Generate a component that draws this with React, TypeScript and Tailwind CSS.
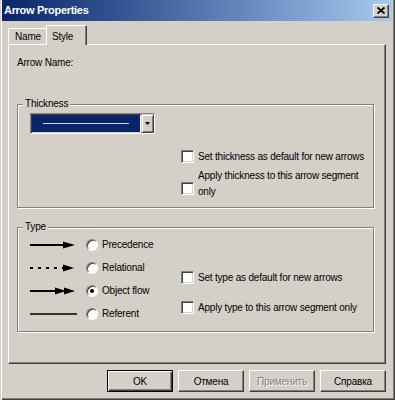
import type { ReactNode } from "react";

const sunken =
  "border border-t-[#808080] border-l-[#808080] border-b-white border-r-white shadow-[inset_1px_1px_0_#404040,inset_-1px_-1px_0_#d4d0c8]";

function Checkbox() {
  return <span className={`block h-[13px] w-[13px] shrink-0 bg-white ${sunken}`} />;
}

function Radio({ checked = false }: { checked?: boolean }) {
  return (
    <span className="flex h-[12px] w-[12px] shrink-0 items-center justify-center rounded-full border border-t-[#808080] border-l-[#808080] border-b-white border-r-white bg-white shadow-[inset_1px_1px_0_#404040]">
      {checked && <span className="h-[4px] w-[4px] rounded-full bg-black" />}
    </span>
  );
}

function ArrowLine({ kind }: { kind: "solid" | "dashed" | "double" | "plain" }) {
  return (
    <svg width="48" height="10" viewBox="0 0 48 10" className="shrink-0">
      {kind === "solid" && (
        <>
          <line x1="0" y1="5" x2="36" y2="5" stroke="#000" strokeWidth="2" />
          <polygon points="33,1.5 45,5 33,8.5" fill="#000" />
        </>
      )}
      {kind === "dashed" && (
        <>
          <line x1="0" y1="5" x2="34" y2="5" stroke="#000" strokeWidth="2" strokeDasharray="3 5" />
          <polygon points="33,1.5 44,5 33,8.5" fill="#000" />
        </>
      )}
      {kind === "double" && (
        <>
          <line x1="0" y1="5" x2="28" y2="5" stroke="#000" strokeWidth="2" />
          <polygon points="25,1.5 36,5 25,8.5" fill="#000" />
          <polygon points="34,1.5 45,5 34,8.5" fill="#000" />
        </>
      )}
      {kind === "plain" && <line x1="0" y1="5" x2="47" y2="5" stroke="#000" strokeWidth="1.6" />}
    </svg>
  );
}

function Group({ label, className, children }: { label: string; className: string; children: ReactNode }) {
  return (
    <div className={`relative border border-[#808080] shadow-[inset_1px_1px_0_#fff,1px_1px_0_#fff] ${className}`}>
      <span className="absolute -top-[8px] left-[5px] bg-[#d4d0c8] px-[2px] leading-[13px]">{label}</span>
      {children}
    </div>
  );
}

function Button({ label, isDefault = false, disabled = false }: { label: string; isDefault?: boolean; disabled?: boolean }) {
  const frame = isDefault
    ? "border border-black shadow-[inset_1px_1px_0_#fff,inset_-1px_-1px_0_#404040,inset_-2px_-2px_0_#808080]"
    : "border border-t-white border-l-white border-b-[#404040] border-r-[#404040] shadow-[inset_-1px_-1px_0_#808080]";
  return (
    <button
      className={`flex h-[22px] w-[66px] items-center justify-center bg-[#d4d0c8] ${frame} ${
        disabled ? "text-[#808080] [text-shadow:1px_1px_0_#fff]" : "text-black"
      }`}
    >
      {label}
    </button>
  );
}

const types = [
  { kind: "solid" as const, label: "Precedence" },
  { kind: "dashed" as const, label: "Relational" },
  { kind: "double" as const, label: "Object flow", checked: true },
  { kind: "plain" as const, label: "Referent" },
];

export default function App() {
  return (
    <div className="flex h-[400px] w-[395px] flex-col overflow-hidden bg-[#d4d0c8] pl-[2px] pr-[3px] font-['Liberation_Sans',Arial,sans-serif] text-[10px] tracking-[-0.2px] text-black shadow-[inset_1px_0_0_#d4d0c8,inset_2px_0_0_#fff,inset_-1px_-1px_0_#404040,inset_-2px_-2px_0_#808080]">
      {/* title bar */}
      <div className="flex h-[21px] items-center justify-between bg-gradient-to-r from-[#0a246a] to-[#a6caf0] pl-[2px] pr-[3px]">
        <span className="text-[11px] font-bold tracking-[-0.3px] text-white">Arrow Properties</span>
        <span className="flex h-[14px] w-[16px] items-center justify-center border border-t-white border-l-white border-b-[#404040] border-r-[#404040] bg-[#d4d0c8] shadow-[inset_-1px_-1px_0_#808080]">
          <svg width="8" height="7" viewBox="0 0 8 7">
            <path d="M0.5 0.5 L7.5 6.5 M7.5 0.5 L0.5 6.5" stroke="#000" strokeWidth="1.8" />
          </svg>
        </span>
      </div>

      {/* tabs */}
      <div className="mt-[4px] flex items-end pl-[6px]">
        <div className="flex h-[16px] w-[39px] items-center border-l border-t border-l-white border-t-white pl-[6px] shadow-[inset_-1px_0_0_#808080]">
          Name
        </div>
        <div className="relative z-10 -mb-[1px] -ml-[1px] flex h-[20px] w-[41px] items-start border-l border-r border-t border-l-white border-r-[#404040] border-t-white bg-[#d4d0c8] pl-[5px] pt-[3px] shadow-[inset_-1px_0_0_#808080]">
          Style
        </div>
      </div>

      {/* panel */}
      <div className="mx-[6px] flex h-[320px] flex-col border border-b-[#404040] border-l-white border-r-[#404040] border-t-white pl-[8px] pt-[11px] shadow-[inset_-1px_-1px_0_#808080]">
        <div className="leading-[13px]">Arrow Name:</div>

        <Group label="Thickness" className="mt-[35px] h-[104px] w-[357px]">
          <div className="flex flex-col pl-[12px] pt-[8px]">
            <div className={`flex h-[21px] w-[125px] ${sunken} bg-white`}>
              <div className="m-[1px] flex flex-1 items-center justify-center bg-[#0a246a]">
                <span className="h-px w-[86px] bg-[#c8d4ff]" />
              </div>
              <div className="flex w-[13px] items-center justify-center border border-t-[#d4d0c8] border-l-[#d4d0c8] border-b-[#404040] border-r-[#404040] bg-[#d4d0c8] shadow-[inset_1px_1px_0_#fff,inset_-1px_-1px_0_#808080]">
                <svg width="5" height="3" viewBox="0 0 5 3">
                  <polygon points="0,0 5,0 2.5,3" fill="#000" />
                </svg>
              </div>
            </div>
            <div className="ml-[151px] mt-[16px] flex items-start gap-[4px]">
              <Checkbox />
              <span className="leading-[13px]">Set thickness as default for new arrows</span>
            </div>
            <div className="ml-[151px] mt-[5px] flex items-start gap-[4px]">
              <span className="mt-[14px]">
                <Checkbox />
              </span>
              <span className="w-[168px] leading-[16px]">Apply thickness to this arrow segment only</span>
            </div>
          </div>
        </Group>

        <Group label="Type" className="mt-[19px] h-[105px] w-[357px]">
          <div className="flex pl-[12px] pt-[5px]">
            <div className="flex w-[151px] flex-col">
              {types.map((t) => (
                <div key={t.label} className="flex h-[23px] items-center">
                  <ArrowLine kind={t.kind} />
                  <span className="ml-[8px]">
                    <Radio checked={t.checked} />
                  </span>
                  <span className="ml-[4px]">{t.label}</span>
                </div>
              ))}
            </div>
            <div className="mt-[33px] flex flex-col gap-[7px]">
              <div className="flex h-[23px] items-center gap-[4px]">
                <Checkbox />
                <span>Set type as default for new arrows</span>
              </div>
              <div className="flex h-[23px] items-center gap-[4px]">
                <Checkbox />
                <span>Apply type to this arrow segment only</span>
              </div>
            </div>
          </div>
        </Group>
      </div>

      {/* buttons */}
      <div className="mt-[6px] flex justify-end gap-[5px] pr-[6px]">
        <Button label="OK" isDefault />
        <Button label="Отмена" />
        <Button label="Применить" disabled />
        <Button label="Справка" />
      </div>
    </div>
  );
}
